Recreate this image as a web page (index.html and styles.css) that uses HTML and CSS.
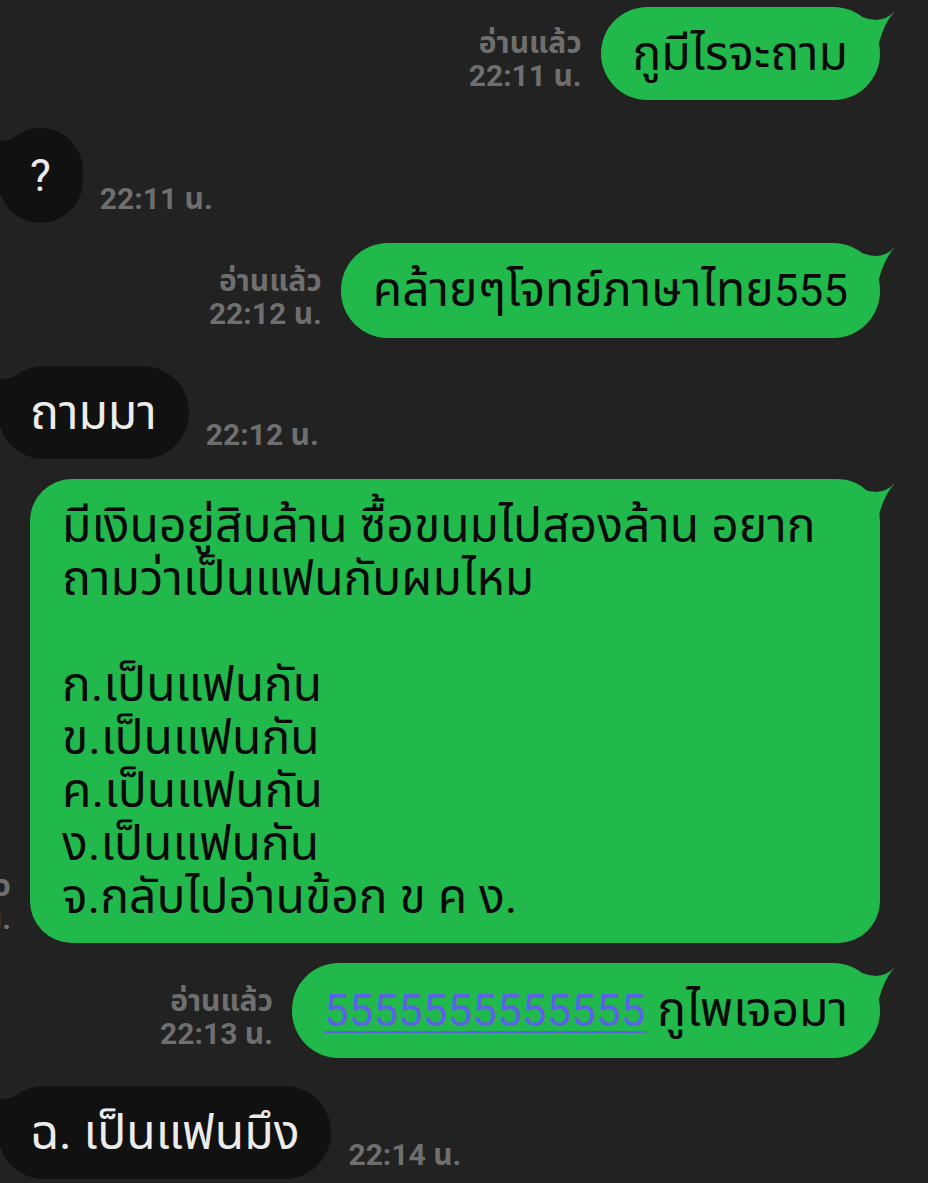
FILE: index.html
```html
<!DOCTYPE html>
<html lang="th">
<head>
<meta charset="utf-8">
<title>Chat</title>
<link rel="stylesheet" href="styles.css">
</head>
<body>
<div class="chat">
  <div class="row out first">
    <div class="meta"><div>อ่านแล้ว</div><div>22:11 น.</div></div>
    <div class="bubble green">กูมีไรจะถาม<svg class="tail-r" width="34" height="40" viewBox="0 0 34 40"><path d="M0,10 Q20,18 33,4 Q22,16 17,36 L0,36 Z"/></svg></div>
  </div>
  <div class="row in">
    <div class="bubble dark"><span class="num">?</span><svg class="tail-l" width="34" height="40" viewBox="0 0 34 40"><path d="M34,10 Q14,18 1,4 Q12,16 17,36 L34,36 Z"/></svg></div>
    <div class="time">22:11 น.</div>
  </div>
  <div class="row out">
    <div class="meta"><div>อ่านแล้ว</div><div>22:12 น.</div></div>
    <div class="bubble green">คล้ายๆโจทย์ภาษาไทย<span class="num">555</span><svg class="tail-r" width="34" height="40" viewBox="0 0 34 40"><path d="M0,10 Q20,18 33,4 Q22,16 17,36 L0,36 Z"/></svg></div>
  </div>
  <div class="row in">
    <div class="bubble dark">ถามมา<svg class="tail-l" width="34" height="40" viewBox="0 0 34 40"><path d="M34,10 Q14,18 1,4 Q12,16 17,36 L34,36 Z"/></svg></div>
    <div class="time">22:12 น.</div>
  </div>
  <div class="row out">
    <div class="meta"><div>อ่านแล้ว</div><div>22:13 น.</div></div>
    <div class="bubble green wide">มีเงินอยู่สิบล้าน ซื้อขนมไปสองล้าน อยาก<br>ถามว่าเป็นแฟนกับผมไหม<br><br>ก.เป็นแฟนกัน<br>ข.เป็นแฟนกัน<br>ค.เป็นแฟนกัน<br>ง.เป็นแฟนกัน<br>จ.กลับไปอ่านข้อก ข ค ง.<svg class="tail-r" width="34" height="40" viewBox="0 0 34 40"><path d="M0,10 Q20,18 33,4 Q22,16 17,36 L0,36 Z"/></svg></div>
  </div>
  <div class="row out">
    <div class="meta"><div>อ่านแล้ว</div><div>22:13 น.</div></div>
    <div class="bubble green"><a class="link num" href="#">5555555555555</a> กูไพเจอมา<svg class="tail-r" width="34" height="40" viewBox="0 0 34 40"><path d="M0,10 Q20,18 33,4 Q22,16 17,36 L0,36 Z"/></svg></div>
  </div>
  <div class="row in">
    <div class="bubble dark">ฉ. เป็นแฟนมึง<svg class="tail-l" width="34" height="40" viewBox="0 0 34 40"><path d="M34,10 Q14,18 1,4 Q12,16 17,36 L34,36 Z"/></svg></div>
    <div class="time">22:14 น.</div>
  </div>
</div>
</body>
</html>
```

FILE: styles.css
```css
html, body {
  margin: 0;
  padding: 0;
  background: #222222;
  overflow: hidden;
}
body {
  width: 928px;
  height: 1183px;
  font-family: Roboto, "Noto Sans", "Noto Sans Thai", sans-serif;
}
.chat {
  display: flex;
  flex-direction: column;
}
.row {
  display: flex;
  align-items: flex-end;
  white-space: nowrap;
}
.row.out {
  justify-content: flex-end;
  padding-right: 48px;
  gap: 19px;
  margin-top: 20px;
}
.row.out.first {
  margin-top: 7px;
}
.row.in {
  justify-content: flex-start;
  margin-top: 28px;
  gap: 17px;
}
.bubble {
  position: relative;
  flex-shrink: 0;
  font-size: 48px;
  line-height: 53px;
  padding: 20px 32px 20px;
  border-radius: 47px;
}
.num {
  font-size: 44px;
}
.bubble.green {
  background: #22b94c;
  color: #0a0a0a;
}
.bubble.green path { fill: #22b94c; }
.bubble.dark {
  background: #111111;
  color: #ececec;
  margin-left: -2px;
}
.bubble.dark path { fill: #111111; }
.bubble.wide {
  width: 786px;
  border-radius: 42px;
}
.tail-r {
  position: absolute;
  right: -16px;
  top: 0;
}
.tail-l {
  position: absolute;
  left: -16px;
  top: 0;
}
.meta {
  flex-shrink: 0;
  text-align: right;
  color: #6f6f6f;
  font-weight: bold;
  font-size: 30px;
  line-height: 33px;
  margin-bottom: 8px;
}
.time {
  flex-shrink: 0;
  color: #6f6f6f;
  font-weight: bold;
  font-size: 30px;
  line-height: 33px;
  margin-bottom: 8px;
}
.link {
  color: #5b62e6;
  text-decoration: underline;
  text-decoration-thickness: 2px;
  text-underline-offset: 5px;
}
```
